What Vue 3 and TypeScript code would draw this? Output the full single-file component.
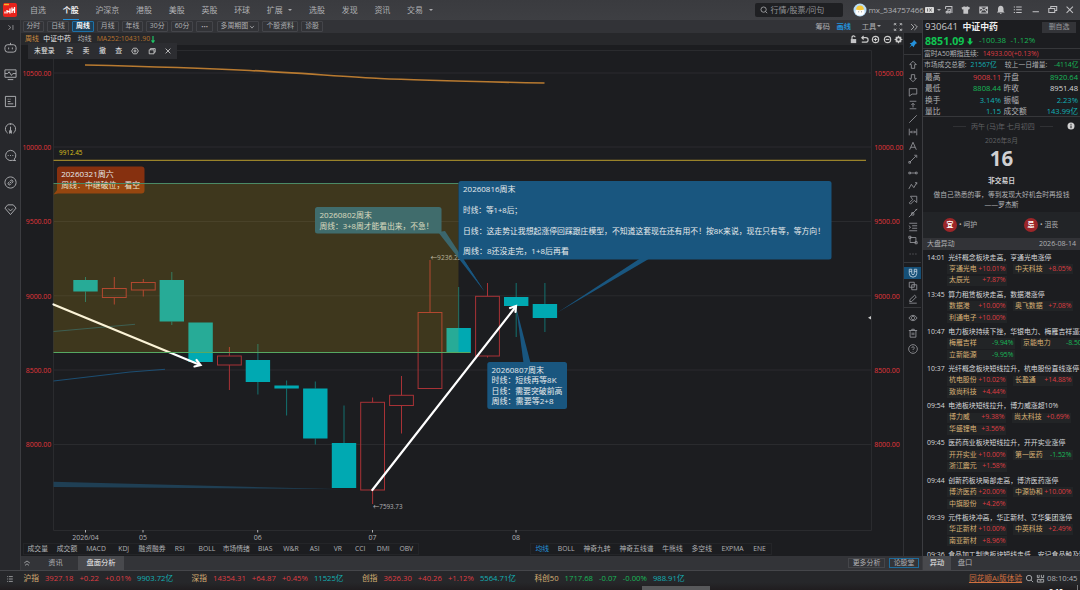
<script setup lang="ts">
interface NavItem { label: string; caret?: boolean; active?: boolean }
interface Candle { x: number; top: number; bottom: number; high: number; low: number; up?: boolean }
interface Chip { name: string; value: string }
interface News { time: string; title: string; size?: string; chips: Chip[] }

const nav: NavItem[] = [
  { label: '自选' }, { label: '个股', active: true }, { label: '沪深京' }, { label: '港股' },
  { label: '美股' }, { label: '英股' }, { label: '环球' }, { label: '扩展', caret: true },
  { label: '选股' }, { label: '发现' }, { label: '资讯' }, { label: '交易', caret: true },
]
const periods = ['分时', '日线', '周线', '月线', '年线', '30分', '60分']

const sideIcons: string[] = [
  'M4 4h6a3 3 0 0 1 3 3v2a3 3 0 0 1-3 3H4a3 3 0 0 1-3-3V7a3 3 0 0 1 3-3zM7 4V2M5 7v2M9 7v2',
  'M1 2h12v8H1zM4 12.500h6M1 6h3l1.500-2L8 8l1.500-2H13',
  'M1.500 1.500h11v11h-11zM4 4.500h1M4 7h3M4 9.500h6M6 4.500h1',
  'M4 12a5.500 5.500 0 1 1 6 0M7 5v7M6 9v3.500M8 9v3.500M7 1.500V3',
  'M11 11a5.500 5.500 0 1 0-2 1.200L12.500 12.500zM4 7h1M6.500 7h1M9 7h1',
  'M7 1a6 6 0 1 0 .01 0zM6.500 5.500l1-1a1.500 1.500 0 0 1 2 2l-1.500 1.500M7.500 8.500l-1 1a1.500 1.500 0 0 1-2-2L6 6M6 8l2-2',
  'M4 2h6l3 3.500L7 12.500 1 5.500zM4.500 6L7 8.500 9.500 6',
]

const drawIcons: string[] = [
  'M6 1.500L10 5.500H8V10H4V5.500H2z',
  'M6 10.500L2 6.500H4V2H8V6.500H10z',
  'M1.500 2h9v6.500H5L1.500 11z',
  'M2 1.500h8M2 10.500h8M6 9V4M4 6l2-2 2 2',
  'M1.500 10.500L10.500 1.500',
  'M1.500 2v8M10.500 2v8M3 6h6M4.500 4.500L3 6l1.500 1.500M7.500 4.500L9 6 7.500 7.500',
  'M2 10.500L6 1.500l4 9M3.500 7.500h5',
  'M2.500 9.500L9.500 2.500M7.500 1.500h3v3M1 9h2v2H1z',
  'M1 5h2v2H1zM3 6h6M9 5h2v2H9z',
  'M1 9.500L4 4l3 4 3.500-6M8.500 2h2v2',
  'M3 1.500h7.500V9L7.500 6.500 3 11 1.500 9.500l4-4z',
  'M1 11L11 1M4.500 5.500h2.500v3H4zM9 2h2',
  'M1.500 1.500h9.500M5 4.500h6M5 7.500h6M1.500 10.500h9.500M1 4.500L3 6 1.500 8',
  'M2.500 3h7v6h-7zM1 1.500h2.500v2.500H1zM8.500 8H11v2.500H8.500z',
  'M2 6h1M5.500 6h1M9 6h1',
]
const magnet = 'M1.500 1.500H4.500V6.500a1.500 1.500 0 0 0 3 0V1.500H10.500V6.500a4.500 4.500 0 0 1-9 0zM1.500 4h3M7.500 4h3'
const copyIcon = 'M1.500 1.500h6v6h-6zM4.500 4.500h6v6h-6z'
const pencil = 'M2 9l.5-2.500L8 1.500l2 2L4.500 9zM1.500 11h9'
const eye = 'M1 6q5-6.500 10 0q-5 6.500-10 0zM6 4a2 2 0 1 0 .01 0z'
const trash = 'M1 3h10M2.500 3v8h7V3M4.500 3V1.500h3V3M5 5.500v3M7 5.500v3'
const help = 'M6 .8a5.200 5.200 0 1 0 .01 0zM4.500 4.800a1.500 1.500 0 1 1 2 1.400q-.5.3-.5 1M6 8.500v.7'

const priceTicks = [
  { label: '10500.00', y: 73 }, { label: '10000.00', y: 147 }, { label: '9500.00', y: 221.5 },
  { label: '9000.00', y: 295.8 }, { label: '8500.00', y: 370 }, { label: '8000.00', y: 444.5 },
]
const dateTicks = [
  { label: '2026/04', x: 85.5, w: 26.5 }, { label: '05', x: 143, w: 8 }, { label: '06', x: 257.7, w: 8 },
  { label: '07', x: 372.5, w: 8 }, { label: '08', x: 516, w: 8 },
]
const candles: Candle[] = [
  { x: 85.5, top: 280, bottom: 291.5, high: 277, low: 302 },
  { x: 114.3, top: 288.5, bottom: 297.5, high: 277, low: 304.5, up: true },
  { x: 143.3, top: 282.5, bottom: 290, high: 279, low: 296.5, up: true },
  { x: 171.8, top: 280, bottom: 321.5, high: 272, low: 325 },
  { x: 200.6, top: 322.5, bottom: 362, high: 322.5, low: 362 },
  { x: 229.4, top: 356, bottom: 365, high: 347, low: 390, up: true },
  { x: 257.9, top: 360, bottom: 382, high: 344, low: 394.5 },
  { x: 286.6, top: 385.5, bottom: 388.5, high: 380.5, low: 415.5 },
  { x: 315.3, top: 388.5, bottom: 438.5, high: 381.5, low: 444.5 },
  { x: 344, top: 443, bottom: 488, high: 405.5, low: 488 },
  { x: 372.6, top: 402.3, bottom: 490, high: 397.5, low: 504, up: true },
  { x: 401.5, top: 395.3, bottom: 405.5, high: 376, low: 433.5, up: true },
  { x: 430, top: 312.5, bottom: 388.5, high: 260, low: 388.5, up: true },
  { x: 458.7, top: 328, bottom: 353, high: 287, low: 353 },
  { x: 487.5, top: 296.3, bottom: 356, high: 283, low: 357.5, up: true },
  { x: 516.2, top: 297, bottom: 306, high: 283, low: 337 },
  { x: 544.9, top: 304, bottom: 318, high: 283, low: 332 },
]

const indicators = ['成交量', '成交额', 'MACD', 'KDJ', '融资融券', 'RSI', 'BOLL', '市场情绪', 'BIAS', 'W&R', 'ASI', 'VR', 'CCI', 'DMI', 'OBV']
const overlays = ['均线', 'BOLL', '神奇九转', '神奇五线谱', '牛熊线', '多空线', 'EXPMA', 'ENE']

const quotes = [
  { l: '最高', v: '9008.11', c: 'red', l2: '开盘', v2: '8920.64', c2: 'green' },
  { l: '最低', v: '8808.44', c: 'green', l2: '昨收', v2: '8951.48', c2: 'white' },
  { l: '换手', v: '3.14%', c: 'cyan', l2: '振幅', v2: '2.23%', c2: 'cyan' },
  { l: '量比', v: '1.15', c: 'cyan', l2: '成交额', v2: '143.99亿', c2: 'cyan' },
]

const news: News[] = [
  { time: '14:01', title: '光纤概念板块走高，亨通光电涨停', chips: [{ name: '亨通光电', value: '+10.01%' }, { name: '中天科技', value: '+8.05%' }, { name: '太辰光', value: '+7.87%' }] },
  { time: '13:45', title: '算力租赁板块走高，数据港涨停', chips: [{ name: '数据港', value: '+10.00%' }, { name: '奥飞数据', value: '+7.08%' }, { name: '利通电子', value: '+10.00%' }] },
  { time: '10:47', title: '电力板块持续下挫，华银电力、梅雁吉祥逼近', size: 'wide', chips: [{ name: '梅雁吉祥', value: '-9.94%' }, { name: '京能电力', value: '-8.50%' }, { name: '立新能源', value: '-9.95%' }] },
  { time: '10:37', title: '光纤概念板块短线拉升，杭电股份直线涨停', chips: [{ name: '杭电股份', value: '+10.02%' }, { name: '长盈通', value: '+14.88%' }, { name: '致尚科技', value: '+4.44%' }] },
  { time: '09:54', title: '电池板块短线拉升，博力威涨超10%', size: 'slim', chips: [{ name: '博力威', value: '+9.38%' }, { name: '尚太科技', value: '+0.69%' }, { name: '华盛锂电', value: '+3.56%' }] },
  { time: '09:45', title: '医药商业板块短线拉升，开开实业涨停', chips: [{ name: '开开实业', value: '+10.00%' }, { name: '第一医药', value: '-1.52%' }, { name: '浙江震元', value: '+1.58%' }] },
  { time: '09:44', title: '创新药板块局部走高，博济医药涨停', chips: [{ name: '博济医药', value: '+20.00%' }, { name: '中源协和', value: '+10.00%' }, { name: '中旗股份', value: '+4.26%' }] },
  { time: '09:39', title: '元件板块冲高，华正新材、艾华集团涨停', chips: [{ name: '华正新材', value: '+10.00%' }, { name: '中英科技', value: '+2.49%' }, { name: '南亚新材', value: '+8.96%' }] },
  { time: '09:36', title: '食品加工制造板块短线走低，安记食品触及跌', chips: [] },
]

const indexes = [
  { name: '沪指', p: '3927.18', d: '+0.22', r: '+0.01%', amt: '9903.72亿', c: 'red' },
  { name: '深指', p: '14354.31', d: '+64.87', r: '+0.45%', amt: '11525亿', c: 'red' },
  { name: '创指', p: '3626.30', d: '+40.26', r: '+1.12%', amt: '5564.71亿', c: 'red' },
  { name: '科创50', p: '1717.68', d: '-0.07', r: '-0.00%', amt: '988.91亿', c: 'green' },
]
const chipColor = (v: string): string => (v.startsWith('-') ? 'green' : 'red')
</script>

<template>
  <div class="app" lang="zh-CN">
    <header class="top">
      <svg class="logo" viewBox="0 0 14 14">
        <rect width="14" height="14" rx="2" fill="#e8231c" />
        <path d="M2 8.500v2M4 7v3.500M4 8.500h3M7 5.500v5M9 4.500v5.500M9 8l2-2M11.500 4v6" stroke="#fff" stroke-width="1.300" />
        <path d="M1 1.500h5" stroke="#f5b52a" stroke-width="1.500" />
      </svg>
      <nav class="nav">
        <div v-for="n in nav" :key="n.label" class="nav-item" :class="{ active: n.active }">
          {{ n.label }}<i v-if="n.caret" class="caret"></i>
        </div>
      </nav>
      <div class="search">
        <svg viewBox="0 0 10 10" class="ic8"><circle cx="4.500" cy="4.500" r="3.300" /><path d="M7 7l2 2" /></svg>
        <span>行情/股票/问句</span>
      </div>
      <svg class="avatar" viewBox="0 0 14 14">
        <circle cx="7" cy="7" r="6.500" fill="#b9dcf5" />
        <ellipse cx="7" cy="9" rx="4.600" ry="3.400" fill="#fff" />
        <path d="M3 6.500q.5-4 4-4t4 4q-4 1.500-8 0z" fill="#f6c93a" />
        <path d="M5.300 8.800h.8M8 8.800h.8" stroke="#555" stroke-width=".7" />
      </svg>
      <span class="user">mx_534757466</span>
      <svg class="badge" viewBox="0 0 9 6"><rect width="9" height="6" rx=".8" fill="#d8d8d8" /><path d="M2.500 1.500v3M4.500 1.500l2 3M6.500 1.500l-2 3" stroke="#555" stroke-width=".8" /></svg>
      <i class="caret user-caret"></i>
      <div class="win">
        <svg viewBox="0 0 12 12"><path d="M2 2h8v8M2 2v3M5 9V5.500h3V9" /><circle cx="3.800" cy="9" r="1.200" /><circle cx="7" cy="9.200" r="1" /></svg>
        <svg viewBox="0 0 12 12"><path class="fill" d="M4 1.500q2 1.500 4 0l3.500 2-1.500 2.500-1-.5V11H3V5.500L2 6 .5 3.500z" /></svg>
        <svg viewBox="0 0 12 12"><path d="M1 2.500h10v7.500H1zM1 2.500l5 4 5-4M1 10l3.500-4M11 10L7.500 6" /></svg>
        <svg viewBox="0 0 12 12"><path class="fill" d="M6 1q3.500.5 3.500 4v3l1.500 1.500H1L2.500 8V5Q2.500 1.500 6 1zM5 10.300h2v1H5z" /></svg>
        <svg viewBox="0 0 12 12"><path d="M1 2.500h1.500M4 2.500h7M1 6h1.500M4 6h7M1 9.500h1.500M4 9.500h7" /></svg>
        <svg viewBox="0 0 12 12"><path d="M2 8.500h8" /></svg>
        <svg viewBox="0 0 12 12"><path d="M3.500 4.500V2h7.500v5H8.500M1 4.500h7.500V9.500H1z" /></svg>
        <svg viewBox="0 0 12 12"><path d="M2 2l8 8M10 2l-8 8" /></svg>
      </div>
    </header>

    <div class="body">
      <aside class="side">
        <svg class="fold" viewBox="0 0 10 10"><path d="M2 2l3.500 3L2 8M8.500 1.500v7" /></svg>
        <div v-for="d in sideIcons" :key="d" class="side-item"><svg viewBox="0 0 14 14"><path :d="d" /></svg></div>
      </aside>

      <main class="main">
        <div class="periods">
          <span v-for="p in periods" :key="p" class="btn" :class="{ on: p === '周线' }">{{ p }}</span>
          <span class="btn dots">•••</span>
          <span class="btn multi">多周期图<svg viewBox="0 0 8 8"><path d="M1.500 2.500L4 5.500l2.500-3" /></svg></span>
          <span class="btn wide">个股资料</span>
          <span class="btn">诊股</span>
          <div class="tools">
            <span>筹码</span><span class="blue bold">画线</span><span class="tool-menu">工具<i class="caret"></i></span>
            <svg viewBox="0 0 12 12"><path d="M1.500 4V2H4M8 2h2.500v2M10.500 8v2H8M4 10H1.500V8M2 2l2 2M10 2L8 4M10 10L8 8M2 10l2-2" /></svg>
            <svg viewBox="0 0 12 12"><path d="M2.500 2.500L6 6 2.500 9.500M6.500 2.500L10 6 6.500 9.500" /></svg>
          </div>
        </div>

        <div class="work">
          <div class="chart-col">
            <div class="legend">
              <span class="amber">周线</span><span class="bright name">中证中药</span><span class="avg">均线</span>
              <span class="ma">MA252:10431.90</span>
              <svg class="down" viewBox="0 0 4 8"><path d="M2 0v7M.3 5L2 7.300 3.700 5" /></svg>
              <div class="mini">
                <svg viewBox="0 0 10 10"><rect x="2" y="4.500" width="6" height="4.500" class="fill" /><path d="M3.300 4.500V3a1.700 1.700 0 0 1 3.400-.5" /></svg>
                <svg viewBox="0 0 10 10"><path d="M2 3h4.500a2.500 2.500 0 0 1 0 5H2M4 1L2 3l2 2" /></svg>
                <svg viewBox="0 0 10 10"><circle cx="5" cy="5" r="3.500" /><path d="M3 5h4M5 3v4" /></svg>
                <svg viewBox="0 0 10 10"><circle cx="5" cy="5" r="3.500" /><path d="M3 5h4" /></svg>
                <svg viewBox="0 0 10 10"><circle cx="5" cy="5" r="2.400" class="thick" /><path d="M5 .7v1.600M5 7.700v1.600M.7 5h1.600M7.700 5h1.600M2 2l1 1M7 7l1 1M8 2L7 3M3 7L2 8" /></svg>
              </div>
            </div>

            <div class="trade">
              <span class="login">未登录</span><span>买</span><span>卖</span><span>撤</span><span>查</span>
              <svg viewBox="0 0 10 10"><path d="M3 1.500h4L9.200 5 7 8.500H3L.8 5z" /><circle cx="5" cy="5" r="1.300" /></svg>
              <svg viewBox="0 0 10 10"><path d="M3 3.500V2h6v4.500H7.500M1.500 3.500h6v5h-6z" /></svg>
              <svg viewBox="0 0 10 10"><path d="M2 2l6 6M8 2L2 8" /></svg>
            </div>

            <svg class="chart" viewBox="21 45 884 498">
              <g class="grid">
                <path d="M53.500 50.500H871.500V530.500H53.500z" />
                <path v-for="t in priceTicks" :key="t.y" :d="`M53.500 ${t.y}H871.500`" />
              </g>
              <g class="price">
                <template v-for="t in priceTicks" :key="t.label">
                  <text x="51.200" :y="t.y + 2.700" text-anchor="end" :textLength="t.label.length === 8 ? 28.800 : 25.400" lengthAdjust="spacingAndGlyphs">{{ t.label }}</text>
                  <text x="874.200" :y="t.y + 2.700" :textLength="t.label.length === 8 ? 29 : 25.600" lengthAdjust="spacingAndGlyphs">{{ t.label }}</text>
                </template>
              </g>
              <g class="dates">
                <template v-for="d in dateTicks" :key="d.label">
                  <path :d="`M${d.x} 530v2.500`" />
                  <text :x="d.x" y="540" text-anchor="middle" :textLength="d.w" lengthAdjust="spacingAndGlyphs">{{ d.label }}</text>
                </template>
              </g>

              <path d="M53.500 481.800L345 489.300L53.500 487z" fill="#1f3f54" />
              <path d="M53.500 331.500L135 324.300" stroke="#1c5a70" stroke-width=".8" />
              <path d="M53.500 381L130 372L165 369.300" stroke="#1c547c" stroke-width=".9" />

              <g v-for="c in candles" :key="c.x" :class="c.up ? 'up' : 'dn'">
                <path :d="`M${c.x} ${c.high}V${c.top}M${c.x} ${c.bottom}V${c.low}`" />
                <rect v-if="c.up" :x="c.x - 11.900" :y="c.top" width="23.800" :height="c.bottom - c.top" />
                <rect v-else :x="c.x - 12.200" :y="c.top" width="24.400" :height="c.bottom - c.top" />
              </g>

              <path d="M85 65C150 66.500 210 68.500 250 70.500S350 77 380 78.500S470 81.500 544.500 83" stroke="#b87a30" stroke-width="1.700" />
              <path d="M53.500 160.400H866" stroke="#9a832a" stroke-width="1.100" />
              <text x="59" y="155.300" class="level" textLength="23.500" lengthAdjust="spacingAndGlyphs">9912.45</text>

              <g class="arrow">
                <path d="M53.500 304.500L199 364.500" />
                <path d="M196.500 360L200.500 365L194.500 366.500" />
              </g>
              <text x="430.500" y="260.300" class="mark" textLength="31" lengthAdjust="spacingAndGlyphs">←9236.22</text>
              <text x="373" y="508.800" class="mark" textLength="29.500" lengthAdjust="spacingAndGlyphs">←7593.73</text>

              <g fill="#19567f">
                <path d="M438 232L445 231L484.500 291.500z" />
                <rect x="315" y="207" width="126.500" height="26.500" rx="2.500" />
              </g>
              <g class="note">
                <text x="319.500" y="217.700" textLength="52.500" lengthAdjust="spacingAndGlyphs">20260802周末</text>
                <text x="319.500" y="228.500" textLength="114" lengthAdjust="spacingAndGlyphs">周线：3+8周才能看出来，不急！</text>
              </g>
              <path d="M53.500 194.500L57 190V169.500a3 3 0 0 1 3-3H141.500a3 3 0 0 1 3 3V190.500a3 3 0 0 1-3 3H58z" fill="#86300f" />
              <g class="note">
                <text x="61.200" y="177.200" textLength="52.500" lengthAdjust="spacingAndGlyphs">20260321周六</text>
                <text x="61.200" y="188" textLength="79" lengthAdjust="spacingAndGlyphs">周线：中继破位，看空</text>
              </g>

              <rect x="53.500" y="183.500" width="405" height="169" fill="#e5b614" fill-opacity=".17" />
              <path d="M53.500 183.500H458.500" stroke="#4b8a66" />
              <path d="M53.500 352.500H470" stroke="#56a862" />
              <rect x="315" y="207" width="126.500" height="26.500" rx="2.500" fill="#6aa070" fill-opacity=".12" />

              <g fill="#19567f">
                <path d="M640 258.500H649.500L557.500 312.500z" />
                <rect x="458.500" y="181" width="373" height="78.500" rx="2.500" />
                <path d="M523.500 363L530.500 363L516.300 308z" />
                <rect x="487.300" y="362" width="79.700" height="47" rx="2.500" />
                <path d="M458.500 251.700L484.500 291.500L458.500 256z" />
              </g>
              <g class="note">
                <text x="463" y="191.800" textLength="52.500" lengthAdjust="spacingAndGlyphs">20260816周末</text>
                <text x="463" y="212.800" textLength="59" lengthAdjust="spacingAndGlyphs">时线：等1+8后；</text>
                <text x="463" y="233.600" textLength="362" lengthAdjust="spacingAndGlyphs">日线：这走势让我想起涨停回踩跟庄模型，不知道这套现在还有用不！按8K来说，现在只有等，等方向！</text>
                <text x="463" y="254.400" textLength="106" lengthAdjust="spacingAndGlyphs">周线：8还没走完，1+8后再看</text>
                <text x="491.500" y="372.500" textLength="52.500" lengthAdjust="spacingAndGlyphs">20260807周末</text>
                <text x="491.500" y="383" textLength="65" lengthAdjust="spacingAndGlyphs">时线：短线再等8K</text>
                <text x="491.500" y="393.500" textLength="71" lengthAdjust="spacingAndGlyphs">日线：需要突破前高</text>
                <text x="491.500" y="403.800" textLength="62" lengthAdjust="spacingAndGlyphs">周线：需要等2+8</text>
              </g>
              <g class="arrow">
                <path d="M372.300 490L515.500 307" />
                <path d="M510 308L516 306L515.500 312" />
              </g>
              <path d="M868 317.700L871 316V319.400z" fill="#ccc" />
            </svg>

            <div class="inds">
              <div class="ind-a"><span v-for="i in indicators" :key="i">{{ i }}</span></div>
              <div class="ind-b"><span v-for="i in overlays" :key="i" :class="{ blue: i === '均线' }">{{ i }}</span></div>
            </div>
          </div>

          <div class="strip">
            <div class="pin"><svg viewBox="0 0 12 12"><path d="M7 1l4 4-1.500.3L7.500 8 7 10 4.700 7.700 1.500 10.500 4 7 2 5l2.500-.5L6.700 2.500z" /></svg></div>
            <div class="tool-group">
              <div v-for="d in drawIcons" :key="d" class="tool"><svg viewBox="0 0 12 12"><path :d="d" /></svg></div>
            </div>
            <div class="tool-group two">
              <div class="tool sel"><svg viewBox="0 0 12 12"><path :d="magnet" /></svg></div>
              <div class="tool"><svg viewBox="0 0 12 12"><path :d="copyIcon" /></svg></div>
              <div class="tool"><svg viewBox="0 0 12 12"><path :d="pencil" /></svg></div>
            </div>
            <div class="tool-group three">
              <div class="tool"><svg viewBox="0 0 12 12"><path :d="eye" /></svg></div>
              <div class="tool"><svg viewBox="0 0 12 12"><path :d="trash" /></svg></div>
              <div class="tool"><svg viewBox="0 0 12 12"><path :d="help" /></svg></div>
            </div>
          </div>
        </div>

        <div class="tabs">
          <svg viewBox="0 0 10 10"><path d="M1.500 5L5 2.500 8.500 5M2.500 8L5 6l2.500 2" /></svg>
          <span class="tab info-tab">资讯</span><span class="tab on">盘面分析</span>
          <span class="more">更多分析</span><span class="forum">论股堂</span>
        </div>
      </main>

      <section class="panel">
        <div class="stock"><span class="code">930641</span><b>中证中药</b><span class="del">删自选</span></div>
        <div class="last">
          <b>8851.09</b>
          <svg viewBox="0 0 8 10"><path d="M2.700 1h2.600v4H7.500L4 9 .5 5h2.200z" fill="#10c552" /></svg>
          <span>-100.38</span><span>-1.12%</span>
        </div>
        <div class="a50"><span>富时A50期指连续:</span><span class="red">14933.00(+0.13%)</span></div>
        <div class="market"><span>市场成交总额:</span><span class="cyan">21567亿</span><span class="cmp">较上一日增量:</span><span class="green last-v">-4114亿</span></div>
        <div class="quotes">
          <div v-for="q in quotes" :key="q.l" class="q">
            <span>{{ q.l }}</span><span class="v" :class="q.c">{{ q.v }}</span><span class="l2">{{ q.l2 }}</span><span class="v" :class="q.c2">{{ q.v2 }}</span>
          </div>
        </div>
        <div class="cal">
          <div class="lunar"><i></i><span>丙午 (马)年 七月初四</span><i></i>
            <svg class="info" viewBox="0 0 8 8"><circle cx="4" cy="4" r="3.500" fill="#d0d0d0" /><path d="M4 1.800v1M4 3.500v2.700" stroke="#1c1d20" /></svg>
          </div>
          <div class="ym">2026年8月</div>
          <div class="day">16</div>
          <div class="closed">非交易日</div>
          <div class="saying">做自己熟悉的事，等到发现大好机会时再投钱<br />——罗杰斯</div>
        </div>
        <div class="luck">
          <div><em>宜</em><span>• 呵护</span></div>
          <div><em>忌</em><span>• 沮丧</span></div>
        </div>
        <div class="feed-head"><span>大盘异动</span><span>2026-08-14</span></div>
        <div class="feed">
          <article v-for="n in news" :key="n.time">
            <h4>{{ n.time }}&nbsp; {{ n.title }}</h4>
            <div class="chips" :class="n.size">
              <span v-for="c in n.chips" :key="c.name" class="chip"><span class="gold">{{ c.name }}</span><span :class="chipColor(c.value)">{{ c.value }}</span></span>
            </div>
          </article>
        </div>
        <div class="ptabs"><span class="on">异动</span><span>盘口</span></div>
      </section>
    </div>

    <footer class="status">
      <svg class="menu" viewBox="0 0 10 10"><path d="M1.500 2h1M3.500 2h5M1.500 5h1M3.500 5h5M1.500 8h1M3.500 8h5" /></svg>
      <div v-for="x in indexes" :key="x.name" class="idx">
        <span class="gold">{{ x.name }}</span><span :class="x.c">{{ x.p }}</span><span :class="x.c">{{ x.d }}</span><span :class="x.c">{{ x.r }}</span><span class="cyan">{{ x.amt }}</span>
      </div>
      <div class="right">
        <u>同花顺AI版体验</u>
        <svg viewBox="0 0 10 10"><circle cx="4.500" cy="4.500" r="3" /><path d="M6.800 6.800L9 9" /></svg>
        <svg viewBox="0 0 10 10"><path d="M1.500 1v3h2V1M6 1v3h2.500V1M1.500 6h7v3h-7zM4 7.500h2" /></svg>
        <span>08:10:45</span>
      </div>
      <div class="under"><i class="thumb"></i><b>8:10</b><i class="edge"></i></div>
    </footer>
  </div>
</template>

<style>
html, body { margin: 0; background: #1c1d20; overflow: hidden; }
</style>

<style scoped>
* { box-sizing: border-box; }
.app { width: 1080px; height: 590px; display: flex; flex-direction: column; overflow: hidden; background: #1c1d20; color: #b0b1b4; font: 7px/1 "Open Sans", "Noto Sans CJK SC", sans-serif; white-space: nowrap; }
svg { fill: none; stroke: #b0b1b4; stroke-width: 1; flex: none; display: block; }
.fill { fill: #c4c4c6; stroke: none; }
.logo, .avatar, .badge, .chart, .last svg, .info { stroke: none; }
.red { color: #df3c42; } .green { color: #18b858; } .cyan { color: #12b0b6; } .white { color: #d8d8d8; } .blue { color: #2492dc; } .gold { color: #d8b074; } .bold { font-weight: 700; }
.caret { display: inline-block; flex: none; width: 0; height: 0; border: 2.200px solid transparent; border-top: 2.800px solid #a9aaad; border-bottom: 0; }

.top { height: 20px; flex: none; display: flex; align-items: center; background: linear-gradient(#3a3b3f, #3e3f43); font-size: 8px; }
.logo { width: 14px; height: 14px; margin-left: 3px; }
.nav { display: flex; gap: 16.700px; margin-left: 13px; width: 725px; height: 20px; }
.nav-item { height: 20px; display: flex; align-items: center; padding-top: 1px; border-bottom: 1.500px solid transparent; }
.nav-item.active { color: #f2f2f2; font-weight: 700; border-color: #2492dc; }
.nav-item .caret { margin: 0 0 0 5.500px; }
.search { width: 88px; height: 14px; flex: none; display: flex; align-items: center; gap: 3px; padding-left: 4.500px; background: #1f2023; border-radius: 2px; color: #929397; }
.ic8 { width: 8px; height: 8px; }
.avatar { width: 14px; height: 14px; margin-left: 10px; }
.user { width: 56px; margin-left: 1.500px; letter-spacing: -.08px; }
.badge { width: 9px; height: 6px; }
.user-caret { margin-left: 3.500px; }
.win { display: flex; justify-content: space-between; width: 131px; margin-left: 3px; }
.win svg { width: 9.500px; height: 9.500px; stroke-width: 1.300; stroke: #c0c0c3; }

.body { flex: 1; display: flex; min-height: 0; height: 550px; }
.side { width: 21px; flex: none; background: #27282c; border-right: 1px solid #3b3c40; display: flex; flex-direction: column; align-items: center; }
.fold { width: 7px; height: 7px; margin: 3.500px 0 3.500px; }
.side-item { height: 27px; display: flex; align-items: center; }
.side-item svg { width: 13px; height: 13px; }

.main { width: 901px; flex: none; display: flex; flex-direction: column; }
.periods { height: 13px; flex: none; display: flex; align-items: center; gap: 3.100px; padding: 0 3px 0 1.500px; background: #323337; font-size: 6.900px; }
.btn { width: 21.700px; height: 10.500px; display: flex; align-items: center; justify-content: center; border: 1px solid #44454a; border-radius: 1px; flex: none; }
.btn.on { border-color: #1d71a8; background: #1c4059; color: #fff; font-weight: 700; }
.btn.dots { width: 17.500px; font-size: 6px; } .btn.multi { width: 42.500px; } .btn.multi svg { width: 6px; height: 6px; margin-left: 1px; } .btn.wide { width: 36px; }
.tools { margin-left: auto; display: flex; align-items: center; font-size: 7.300px; gap: 6.300px; }
.tools svg { width: 10px; height: 10px; stroke-width: 1.100; }
.tool-menu { display: flex; align-items: center; gap: 1px; margin: 0 5px 0 4.500px; }
.work { flex: 1; display: flex; min-height: 0; }
.chart-col { width: 883px; flex: none; display: flex; flex-direction: column; position: relative; border-right: 1px solid #303135; }
.legend { height: 12px; flex: none; background: #27282b; display: flex; align-items: center; padding-left: 4px; font-size: 6.900px; }
.amber { color: #cd8c40; } .bright { color: #e6e6e6; } .legend .name { margin: 0 7px 0 4.500px; } .avg { margin-right: 5px; } .ma { color: #b5712c; width: 54px; }
.down { width: 4px; height: 7px; stroke: #1fc768; stroke-width: 1.300; }
.mini { margin-left: auto; display: flex; gap: 2.300px; } .mini svg { width: 9px; height: 9px; stroke: #cacaca; stroke-width: 1.300; } .mini .thick { stroke-width: 2; }
.trade { position: absolute; left: 7px; top: 10px; width: 149px; height: 16px; background: #2c2d31; display: flex; align-items: center; gap: 9.500px; padding-left: 6px; font-size: 6.900px; color: #e8e8e8; }
.login { margin-right: 2px; } .trade svg { width: 8px; height: 8px; stroke: #d8d8d8; margin-left: -.8px; }

.chart { width: 884px; height: 498px; margin-right: -1px; font-size: 7px; }
.grid path { stroke: #2a2b2e; }
.price text { fill: #e2363b; } .dates text, .mark { fill: #b0b1b4; } .dates path { stroke: #b0b1b4; } .mark { font-size: 6.300px; } .level { fill: #dcc01c; font-size: 6.300px; }
.note text { fill: #e8ebec; font-size: 7.900px; }
.up path, .up rect { stroke: #a83236; fill: none; } .dn path { stroke: #13716f; } .dn rect { fill: #00a9b2; }
.arrow path { stroke: #fff; stroke-width: 2.200; stroke-linecap: round; }
.inds { height: 13px; flex: none; display: flex; align-items: flex-start; padding-left: 1.500px; gap: 111.500px; font-size: 6.800px; text-align: center; }
.ind-a, .ind-b { display: grid; height: 12px; align-items: center; border: 1px solid #242528; }
.ind-a { grid-template-columns: 28.500px 30px 28px 27.500px 29px 26.500px 28px 30.500px 27.500px 24px 23.500px 22.500px 22.500px 23.500px 22.500px; }
.ind-b { grid-template-columns: 22.500px 25.500px 36px 43px 29px 29.500px 32px 22px; }

.strip { width: 17px; flex: none; }
.strip svg { width: 10px; height: 10px; stroke: #98999d; }
.strip .pin svg { fill: #2492dc; stroke: none; }
.pin { height: 22px; display: flex; align-items: center; justify-content: center; border-bottom: 1px solid #36373a; }
.tool-group { padding: 3.200px 0 1.800px; border-bottom: 1px solid #36373a; }
.tool { height: 13.500px; display: flex; align-items: center; justify-content: center; }
.two { padding: 4px 0 2px; } .two .tool { height: 13px; } .two .sel { height: 12px; background: #155078; } .strip .sel svg { stroke: #c5d7e4; }
.three { border: 0; padding-top: 2px; } .three .tool { height: 15.300px; }

.tabs { height: 14px; flex: none; background: #333438; display: flex; align-items: center; font-size: 7.300px; }
.tabs > svg { width: 8px; height: 8px; margin-left: 2px; margin-right: 10px; }
.tab { width: 37px; height: 14px; display: flex; align-items: center; justify-content: center; } .tab.on { width: 46px; background: #48494d; color: #ededed; } .info-tab { padding-right: 8px; }
.more, .forum { height: 10.500px; border: 1px solid #45464a; display: flex; align-items: center; justify-content: center; font-size: 6.900px; }
.more { width: 37px; margin-left: auto; } .forum { width: 30px; margin: 0 3px 0 4px; border-color: #1e6c9c; }

.panel { width: 158px; flex: none; border-left: 1px solid #3b3c40; display: flex; flex-direction: column; overflow: hidden; }
.stock { height: 14px; flex: none; display: flex; align-items: center; padding-left: 2px; font-size: 9.600px; color: #c8c8ca; }
.stock b { font-size: 8.900px; color: #f0f0f0; margin-left: 4.500px; } .del { width: 34px; height: 11px; margin-left: auto; margin-right: 4px; background: #333438; font-size: 6.900px; display: flex; align-items: center; justify-content: center; color: #98999c; }
.last { height: 15px; flex: none; display: flex; align-items: center; padding-left: 2px; border-bottom: 1px solid #36373a; color: #18b455; font-size: 7.900px; }
.last b { font-size: 10.600px; color: #10c552; } .last svg { width: 8px; height: 9px; margin: 0 4.500px 0 2px; } .last span { margin-right: 4.500px; }
.a50, .market { height: 11px; flex: none; display: flex; align-items: center; border-bottom: 1px solid #36373a; font-size: 6.800px; padding-left: 1px; }
.a50 .red { margin-left: 4px; }
.market { height: 11.500px; } .market .cyan { margin-left: 4px; } .cmp { margin-left: 8px; } .last-v { margin-left: auto; margin-right: 1.500px; }
.quotes { height: 45.500px; flex: none; padding-top: 1px; border-bottom: 1px solid #36373a; }
.q { height: 11.200px; display: grid; grid-template-columns: 26px 50px 28px 49px; padding-left: 2px; align-items: center; font-size: 7.700px; } .q .v { text-align: right; font-size: 7.600px; } .l2 { padding-left: 2.500px; }
.cal { height: 95px; flex: none; text-align: center; }
.lunar { display: flex; align-items: center; gap: 5px; height: 10px; margin-top: 4px; padding-left: 30px; font-size: 7px; color: #606164; position: relative; } .lunar i { width: 13px; height: 1px; background: #303134; }
.info { width: 8px; height: 8px; position: absolute; right: 5px; top: 1px; }
.ym { font-size: 6.800px; color: #606164; margin-top: 6.500px; } .day { font-size: 20.500px; font-weight: 700; color: #d0d0d2; line-height: 22px; margin-top: 3px; } .closed { font-size: 6.800px; font-weight: 700; color: #d0d0d2; margin-top: 9px; } .saying { font-size: 6.800px; line-height: 10px; margin-top: 5px; }
.luck { height: 26px; flex: none; background: #222427; display: flex; padding-left: 20px; } .luck div { width: 81px; flex: none; display: flex; align-items: center; gap: 2px; font-size: 6.900px; }
.luck em { width: 14px; height: 14px; border-radius: 50%; background: #9b2629; color: #fff; font-style: normal; font-weight: 700; display: flex; align-items: center; justify-content: center; }
.feed-head { height: 12px; flex: none; background: #323337; display: flex; justify-content: space-between; align-items: center; padding: 0 4px; font-size: 6.900px; } .feed-head span:last-child { font-size: 7.100px; }
.feed { flex: 1; min-height: 0; overflow: hidden; padding: 1.500px 0 0 4px; }
article { height: 37.200px; } h4 { margin: 0; font-size: 6.900px; font-weight: 400; line-height: 12.500px; color: #d8d9db; }
.chips { display: grid; grid-template-columns: 60px 60px; gap: 1.500px 6px; padding-left: 20px; } .chips.wide { grid-template-columns: 68px 68px; } .chips.slim { grid-template-columns: 59px 59px; }
.chip { height: 10.300px; padding: 0 1.500px 0 2px; background: #222426; display: flex; justify-content: space-between; align-items: center; font-size: 6.900px; }
.ptabs { height: 14px; flex: none; background: #333438; display: flex; font-size: 7.300px; } .ptabs span { width: 28px; display: flex; align-items: center; justify-content: center; } .ptabs .on { background: #48494d; color: #f0f0f0; }

.status { height: 20px; flex: none; border-top: 1px solid #45464a; background: linear-gradient(#26272a 60%, #201d1f); display: flex; align-items: flex-start; position: relative; font-size: 7.700px; line-height: 15px; }
.menu { width: 8px; height: 8px; margin: 4px 5.500px 0 6px; } .idx { display: flex; gap: 6.050px; margin-left: 4px; margin-right: 14.400px; }
.right { margin-left: auto; display: flex; padding-right: 2.500px; } .right u { color: #d0703f; font-size: 7.700px; } .right svg { width: 9px; height: 9px; margin: 3px 0 0 2.500px; } .right span { font-size: 7.700px; margin-left: 2px; }
.under { position: absolute; left: 0; right: 0; bottom: 0; height: 5px; overflow: hidden; } .thumb { position: absolute; left: 642px; top: .5px; width: 68px; height: 5px; background: #58595b; } .under b { position: absolute; left: 1049px; top: 2.500px; font-size: 7px; line-height: 7px; color: #fff; } .edge { position: absolute; right: 2px; width: 1px; height: 5px; background: #77787a; }
</style>
